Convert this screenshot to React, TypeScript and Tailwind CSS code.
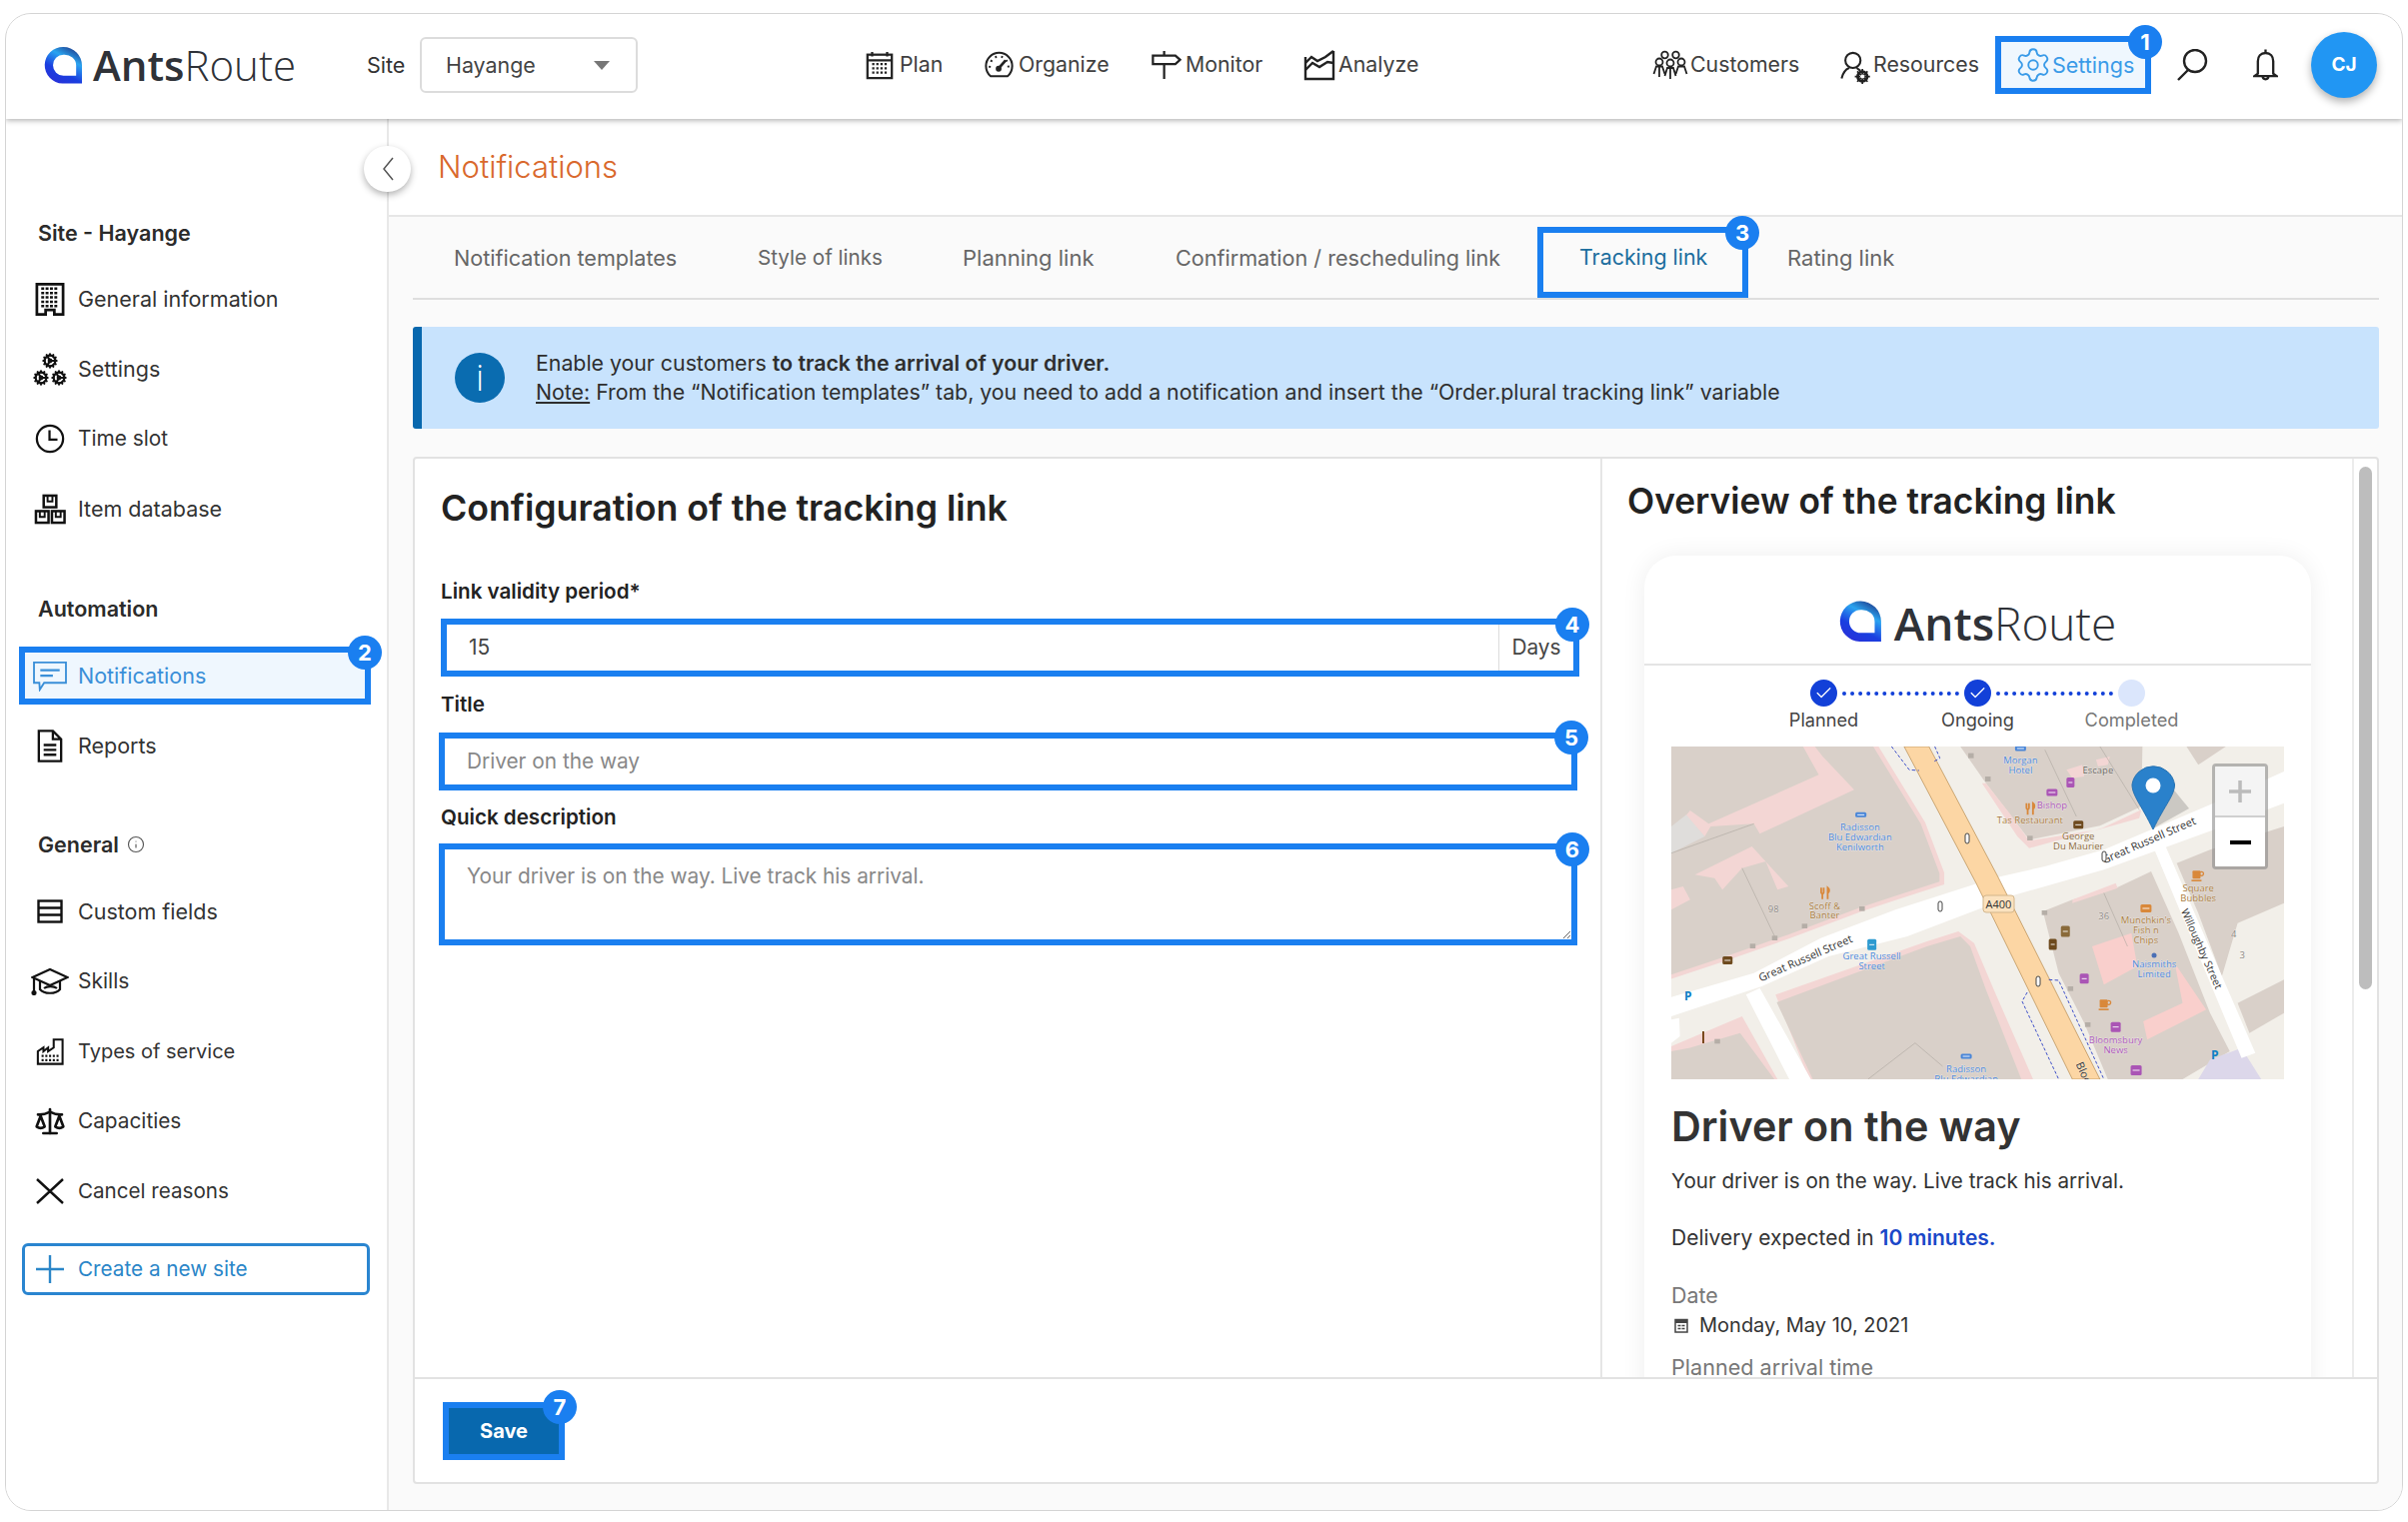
import React from "react";
import { Settings as Gear, Cog, Scale, Info, Check } from "lucide-react";

type SP = { className?: string };
const I = ({ className = "", vb = "0 0 32 32", w = 2, children }: { className?: string; vb?: string; w?: number; children: React.ReactNode }) => (
  <svg viewBox={vb} fill="none" stroke="currentColor" strokeWidth={w} className={className}>{children}</svg>
);

const LogoMark = ({ className = "", id }: { className?: string; id: string }) => (
  <svg viewBox="0 0 40 40" className={className}>
    <defs>
      <linearGradient id={id} x1="0.75" y1="0" x2="0.2" y2="1">
        <stop offset="0" stopColor="#1f3f8f" />
        <stop offset="0.3" stopColor="#2aa4f0" />
        <stop offset="0.65" stopColor="#1a3fe0" />
        <stop offset="1" stopColor="#2a2fd8" />
      </linearGradient>
    </defs>
    <path fillRule="evenodd" fill={`url(#${id})`} d="M20 1A19 19 0 0 1 39 20V38.500H19A18.700 18.700 0 0 1 20 1ZM20 9A10.500 10.500 0 0 0 20 30.500H33V20A12 11 0 0 0 20 9Z" />
  </svg>
);

const Brand = ({ size }: { size: string }) => (
  <span className={`font-['Open_Sans',sans-serif] text-[#2f3238] leading-none whitespace-nowrap ${size}`}>
    <span className="font-semibold">Ants</span><span className="font-light">Route</span>
  </span>
);

const Badge = ({ n, className }: { n: number; className: string }) => (
  <span className={`absolute z-20 w-[34px] h-[34px] rounded-full bg-[#1a7ff0] text-white text-[22px] font-bold flex items-center justify-center ${className}`}>{n}</span>
);

const PlanIcon = ({ className }: SP) => (
  <I className={className} w={2.4}>
    <rect x="3" y="5" width="26" height="25" />
    <path d="M3 11H29M8 2V7M24 2V7" />
    <path strokeWidth="2.400" strokeDasharray="2.400 2" d="M8 15H25M8 19.500H25M8 24H25" />
  </I>
);
const GaugeIcon = ({ className }: SP) => (
  <I className={className} w={2.2}>
    <path d="M7 28C3.500 25 2 21 2 17A14 14 0 0 1 30 17C30 21 28.500 25 25 28Z" />
    <path d="M16 19L23 11" strokeWidth="3" />
    <path strokeDasharray="2 4.500" d="M6 19C6 12 10 7 16 7C22 7 26 12 26 19" />
    <circle cx="15.500" cy="20" r="2" fill="currentColor" />
  </I>
);
const SignIcon = ({ className }: SP) => (
  <I className={className} w={2.4}>
    <path d="M2 6H26L31 10.500L26 15H2ZM14 1V6M14 15V31" />
  </I>
);
const AnalyzeIcon = ({ className }: SP) => (
  <I className={className} w={2.4}>
    <path d="M2 8V30H30V2" />
    <path d="M2 14L8 8L14 12L22 8L30 2M2 21L9 14L16 18L24 13L30 14" />
  </I>
);
const People = ({ className }: SP) => (
  <I className={className} vb="0 0 36 30" w={1.8}>
    <circle cx="12.500" cy="5" r="3.300" /><circle cx="23.500" cy="5" r="3.300" />
    <circle cx="7" cy="12" r="3.500" /><circle cx="18" cy="13" r="3.500" /><circle cx="29" cy="12" r="3.500" />
    <path d="M1.500 24L4 16.500H10L12.500 24M7 17V27M12.500 26L15 18H21L23.500 26M18 18V29M23.500 24L26 16.500H32L34.500 24" />
  </I>
);
const ResIcon = ({ className }: SP) => (
  <svg viewBox="0 0 34 38" fill="none" stroke="currentColor" className={className}>
    <circle cx="13" cy="11" r="8" strokeWidth="2.200" />
    <path d="M9 19C4 21 2 26 1 30" strokeWidth="2.200" />
    <path d="M17 19L21 22" strokeWidth="2.200" />
    <circle cx="23" cy="28" r="5" strokeWidth="3" />
    <path d="M23 20V36M15 28H31M17.500 22.500L28.500 33.500M28.500 22.500L17.500 33.500" strokeWidth="1.800" />
    <circle cx="23" cy="28" r="2.200" fill="#fff" stroke="none" />
  </svg>
);
const SearchIcon = ({ className }: SP) => (
  <I className={className} w={2.4}>
    <ellipse cx="19" cy="12" rx="11" ry="11" />
    <path d="M12 21L2 31" />
  </I>
);
const BellIcon = ({ className }: SP) => (
  <I className={className} vb="0 0 26 34" w={2.4}>
    <path d="M13 1V4M5 26V13C5 8 8 4.500 13 4.500C18 4.500 21 8 21 13V26L24.500 28.500H1.500Z" />
    <path d="M10 28.500C10 33 16 33 16 28.500" />
  </I>
);
const BuildingIcon = ({ className }: SP) => (
  <svg viewBox="0 0 30 34" className={className}>
    <path d="M1.500 1.500H28.500V32.500H19.500V28H10.500V32.500H1.500Z" fill="none" stroke="#111" strokeWidth="2.800" />
    <path d="M6 6H24M6 10.500H24M6 15H24M6 19.500H24M6 24H24" stroke="#111" strokeWidth="2.600" strokeDasharray="3 1.500" fill="none" />
  </svg>
);
const Gears = ({ className }: SP) => (
  <span className={`relative inline-block ${className}`}>
    <Cog className="absolute left-[9px] top-0 w-[16px] h-[16px]" strokeWidth={3.2} />
    <Cog className="absolute left-0 top-[17px] w-[16px] h-[16px]" strokeWidth={3.2} />
    <Cog className="absolute left-[18px] top-[17px] w-[16px] h-[16px]" strokeWidth={3.2} />
  </span>
);
const ClockIcon = ({ className }: SP) => (
  <I className={className} w={2.4}>
    <circle cx="16" cy="16" r="14" /><path d="M15.500 7V17H24" />
  </I>
);
const BoxesIcon = ({ className }: SP) => (
  <svg viewBox="0 0 34 32" className={className} fill="none" stroke="#111" strokeWidth="2.600">
    <rect x="10" y="2" width="13" height="12" /><rect x="2" y="18" width="13" height="12" /><rect x="18.500" y="18" width="13" height="12" />
    <path d="M14 2V8H19V2M6 18V24H11V18M22.500 18V24H27.500V18" strokeWidth="2" />
  </svg>
);
const ChatIcon = ({ className }: SP) => (
  <I className={className} vb="0 0 36 32" w={1.9}>
    <path d="M1.500 2H34.500V23H12L7.500 30L7 23H1.500Z" />
    <path d="M8 10H28M8 15.500H21" strokeWidth="2.300" />
  </I>
);
const DocIcon = ({ className }: SP) => (
  <I className={className} vb="0 0 26 34" w={2.4}>
    <path d="M1.500 1.500H16L24.500 10V32.500H1.500ZM16 1.500V10H24.500" />
    <path d="M6.500 16H19.500M6.500 21H19.500M6.500 26H19.500" />
  </I>
);
const RowsIcon = ({ className }: SP) => (
  <I className={className} vb="0 0 26 24" w={2.4}><rect x="1.500" y="1.500" width="23" height="21" /><path d="M1.500 8.500H24.500M1.500 15.500H24.500" /></I>
);
const CapIcon = ({ className }: SP) => (
  <I className={className} vb="0 0 38 28" w={2.2}>
    <path d="M1.500 10L19 2L36.500 10L19 18Z" />
    <path d="M9 13.500V22C13 27 25 27 29 22V13.500" />
    <path d="M13 21C16 18.500 23 18.500 26 21" />
    <path d="M3 11V25" />
    <circle cx="3" cy="25.500" r="1.500" fill="currentColor" />
  </I>
);
const FactoryIcon = ({ className }: SP) => (
  <I className={className} vb="0 0 30 30" w={2.2}>
    <path d="M2 28.500V15L8 11V15L13 11V15L19 11V2.500H28.500V28.500Z" />
    <path d="M6 20H25M6 24.500H25" strokeDasharray="2.200 1.800" strokeWidth="2.300" />
  </I>
);

const sx = 613 / 1558, sy = 1 / 3;
const T = ({ x, y, t, c = "#4a86d8", r, s = 9.5, a = "middle" as const }: { x: number; y: number; t: string; c?: string; r?: number; s?: number; a?: "middle" | "start" }) => {
  const X = x * sx, Y = y * sy;
  return <text x={X} y={Y} fontSize={s} fill={c} textAnchor={a} stroke="#fff" strokeWidth=".4" paintOrder="stroke" transform={r ? `rotate(${r} ${X} ${Y})` : undefined}>{t}</text>;
};
const B = ({ x, y, c, w = 11, h = 10 }: { x: number; y: number; c: string; w?: number; h?: number }) => (
  <g>
    <rect x={x * sx - w / 2} y={y * sy - h / 2} width={w} height={h} rx="1.500" fill={c} />
    <path d={`M${x * sx - w / 2 + 2} ${y * sy}H${x * sx + w / 2 - 2}`} stroke="#fff" strokeWidth=".9" />
  </g>
);
const Food = ({ x, y }: { x: number; y: number }) => (
  <g stroke="#d9883a" strokeWidth="1.800" fill="none" transform={`translate(${x * sx} ${y * sy})`}>
    <path d="M-3.500 -5.500V-1C-3.500 1 -1 1 -1 -1V-5.500M-2.300 0V6" />
    <path d="M3 6V-5.500C5 -4 5 -1 3 0" fill="#d9883a" />
  </g>
);
const Cup = ({ x, y }: { x: number; y: number }) => (
  <g transform={`translate(${x * sx} ${y * sy})`}>
    <rect x="-5" y="-5" width="8" height="8" fill="#d9883a" rx="1" />
    <circle cx="4" cy="-2" r="2" stroke="#d9883a" strokeWidth="1.300" fill="none" />
    <rect x="-6" y="4" width="10" height="1.600" fill="#d9883a" />
  </g>
);

const OsmMap = () => (
  <svg viewBox="0 0 613 333" preserveAspectRatio="none" className="block w-[613px] h-[333px] font-['Open_Sans',sans-serif]">
    <rect width="613" height="333" fill="#f2efe9" />
    <g transform={`scale(${sx} ${sy})`}>
      <path fill="#d9d0c9" stroke="#f3d6d4" strokeWidth="12" d="M-10 -10H515L640 230L688 380V410L570 455L480 490L300 570L130 640L-10 695Z" />
      <path fill="#f3d6d4" d="M335 0L375 85L95 232L48 192L35 210L85 270L100 240L210 232L225 262L465 130L385 30L365 0Z" />
      <path fill="#dfdddb" d="M0 240L38 205L85 270L0 320Z" />
      <path fill="#f3d6d4" d="M60 385L205 300L298 420L270 430L240 345L180 365L130 430L110 395ZM0 430L30 420L48 460L0 490Z" />
      <path fill="#d9d0c9" d="M735 0H1198L1195 180L1090 238L910 280L800 110Z" />
      <path fill="#f3d6d4" d="M790 110L880 270L910 305L1095 245L1195 190L1190 215L1085 250L910 283L860 200L800 110ZM1005 70L1045 55L1050 90L1020 95ZM1080 40L1115 30L1110 55L1085 60Z" />
      <path fill="#d9d0c9" d="M1310 0H1410L1340 55Z" />
      <path fill="#d9d0c9" d="M945 495L1020 460L1130 425L1220 375L1290 560L1370 800L1420 915L1300 999H1110L1050 830L985 680Z" />
      <path fill="#f9cfcc" d="M1070 600L1170 560L1185 660L1100 715ZM1280 650L1360 790L1210 880L1200 825L1300 770Z" />
      <path fill="#f3d6d4" d="M1020 460L1130 410L1135 425L1020 470Z" />
      <path fill="#d9d0c9" d="M1285 350L1370 310L1558 240V470L1440 530L1400 690L1340 500Z" />
      <path fill="#d9d0c9" d="M1440 770L1558 700V800L1470 860Z" />
      <path fill="#f3d6d4" d="M265 745L650 585L730 555L770 590L820 730L920 999H350Z" />
      <path fill="#d9d0c9" d="M268 768L650 600L735 570L760 600L800 730L890 999H360Z" />
      <path fill="#f3d6d4" d="M0 900L180 810L270 999H0Z" />
      <path fill="#d9d0c9" d="M0 915L45 905L175 860L262 999H0Z" />
      <path fill="#dcd7ea" d="M1370 940L1450 905L1500 999H1340Z" />
      <path fill="#fff" d="M0 752L210 680L380 575L570 490L780 410L830 392L950 360L1100 310L1370 175L1558 75V170L1380 250L1100 370L950 420L860 450L800 480L600 570L400 630L230 720L0 810Z" />
      <path fill="#fff" d="M1225 300L1255 295L1485 920L1450 935ZM190 745L225 725L355 999H300ZM0 820L20 815L22 870L0 890Z" />
      <path fill="#fcd6a4" stroke="#b98f55" strokeWidth="2" d="M592 0H655L830 390L1090 999H1020L775 410Z" />
      <path fill="none" stroke="#a9a39c" strokeWidth="1.500" d="M180 365L265 575M0 320L210 232M1100 440L1160 600M950 10L1030 210M1090 0L1190 190M500 999L620 890L690 960" />
      <path fill="none" stroke="#2b3fc4" strokeWidth="2.500" strokeDasharray="9 6" d="M560 0L605 70L630 72M670 0L683 35L668 45M960 700L985 702L1100 999M905 738L892 765L985 999" />
      <path fill="#f2efe9" d="M1285 80L1300 85L1320 190L1300 195Z" />
      <g fill="#b5aea7">
        <rect x="755" y="20" width="14" height="15" /><rect x="798" y="90" width="14" height="15" /><rect x="905" y="268" width="14" height="14" /><rect x="478" y="480" width="14" height="14" />
        <rect x="332" y="532" width="14" height="14" /><rect x="256" y="568" width="14" height="14" /><rect x="200" y="592" width="14" height="14" /><rect x="942" y="492" width="14" height="14" />
        <rect x="1008" y="720" width="14" height="14" /><rect x="1052" y="828" width="14" height="14" /><rect x="110" y="878" width="14" height="14" />
      </g>
    </g>
    <T x={888} y={52} t="Morgan" /><T x={888} y={82} t="Hotel" />
    <T x={1085} y={82} t="Escape" c="#6a6560" />
    <T x={968} y={187} t="Bishop" c="#aa55b5" />
    <T x={912} y={232} t="Tas Restaurant" c="#a87a3c" />
    <T x={1035} y={280} t="George" c="#8a6a3a" /><T x={1035} y={310} t="Du Maurier" c="#8a6a3a" />
    <T x={480} y={252} t="Radisson" /><T x={480} y={282} t="Blu Edwardian" /><T x={480} y={312} t="Kenilworth" />
    <T x={390} y={488} t="Scoff &" c="#a87a3c" /><T x={390} y={517} t="Banter" c="#a87a3c" />
    <T x={260} y={498} t="98" c="#8a8580" /><T x={1100} y={518} t="36" c="#8a8580" />
    <T x={1430} y={572} t="4" c="#8a8580" /><T x={1452} y={635} t="3" c="#8a8580" />
    <T x={1340} y={436} t="Square" c="#a87a3c" /><T x={1340} y={465} t="Bubbles" c="#a87a3c" />
    <T x={1207} y={531} t="Munchkin's" c="#a87a3c" /><T x={1207} y={561} t="Fish n" c="#a87a3c" /><T x={1207} y={591} t="Chips" c="#a87a3c" />
    <T x={1228} y={663} t="Naismiths" /><T x={1228} y={693} t="Limited" />
    <T x={510} y={639} t="Great Russell" /><T x={510} y={669} t="Street" />
    <T x={1130} y={890} t="Bloomsbury" c="#aa55b5" /><T x={1130} y={920} t="News" c="#aa55b5" />
    <T x={750} y={977} t="Radisson" /><T x={750} y={1007} t="Blu Edwardian" />
    <T x={345} y={646} t="Great Russell Street" c="#333" r={-23.5} s={11} />
    <T x={1218} y={292} t="Great Russell Street" c="#333" r={-23.5} s={11} />
    <T x={1340} y={612} t="Willoughby Street" c="#333" r={66} s={10.5} />
    <T x={1040} y={985} t="Bloo" c="#333" r={66} s={11} />
    <g>
      <rect x={312} y={149} width={31} height={17} rx="3" fill="#fbe2bf" stroke="#d3b68c" />
      <text x={327.5} y={162} fontSize="11" fill="#333" textAnchor="middle">A400</text>
    </g>
    <Food x={390} y={440} /><Food x={912} y={187} /><Cup x={1338} y={388} /><B x={1207} y={486} c="#d9883a" h={8} /><Cup x={1102} y={775} />
    <B x={1015} y={108} c="#aa55b5" w={8} /><B x={968} y={138} c="#aa55b5" w={11} h={7} /><B x={1050} y={697} c="#aa55b5" w={9} /><B x={1130} y={842} c="#aa55b5" w={10} /><B x={1182} y={972} c="#aa55b5" />
    <B x={1035} y={235} c="#6e4a1e" w={10} h={8} /><B x={143} y={642} c="#6e4a1e" w={10} h={8} /><B x={970} y={594} c="#6e4a1e" w={8} h={11} /><B x={1002} y={555} c="#8a6a3a" w={9} h={11} />
    <B x={482} y={205} c="#4a86d8" w={11} h={5} /><B x={750} y={930} c="#4a86d8" w={11} h={5} /><B x={510} y={595} c="#2d9ad0" w={9} h={11} /><B x={888} y={6} c="#4a86d8" w={11} h={5} />
    <text x={13} y={254} fontSize="12" fontWeight="700" fill="#0d7fc6">P</text>
    <text x={540} y={313} fontSize="12" fontWeight="700" fill="#0d7fc6">P</text>
    <rect x={31} y={285} width={2} height={12} fill="#7a4a1e" />
    <circle cx={483} cy={209} r={2.5} fill="#4a6fb5" />
    <g fill="#fff" stroke="#444" strokeWidth="1">
      <rect x={294} y={87} width={4} height={10} rx="2" /><rect x={267} y={155} width={4} height={10} rx="2" /><rect x={365} y={230} width={4} height={10} rx="2" /><rect x={431} y={105} width={4} height={10} rx="2" />
    </g>
    <path d="M482 82L500 40L518 62Z" fill="#000" opacity=".16" />
    <path d="M482 83C470 58 461 49 461 38A21.500 21.500 0 0 1 503.500 38C503.500 49 494 58 482 83Z" fill="#2a81cb" stroke="#2672b2" />
    <circle cx="482" cy="39" r="7.500" fill="#fff" />
    <foreignObject x="541" y="17" width="56" height="106">
      <div className="w-[56px] h-[106px] border-[3px] border-[#8a8a8a]/60 rounded-[4px] overflow-hidden flex flex-col">
        <div className="h-[51px] bg-[#f4f4f4] border-b-2 border-[#cfcfcf] flex items-center justify-center">
          <svg viewBox="0 0 22 22" className="w-[22px] h-[22px]"><path d="M11 0V22M0 11H22" stroke="#bbb" strokeWidth="3.500" /></svg>
        </div>
        <div className="flex-1 bg-white flex items-center justify-center"><div className="w-[21px] h-[4px] bg-black" /></div>
      </div>
    </foreignObject>
  </svg>
);

const Nav = ({ icon, label, w }: { icon: React.ReactNode; label: string; w: string }) => (
  <div className={`flex items-center h-full text-[21.3px] text-[#404040] ${w}`}>
    {icon}<span className="whitespace-nowrap">{label}</span>
  </div>
);

const SideItem = ({ icon, label, t = "text-[21.5px]" }: { icon: React.ReactNode; label: string; t?: string }) => (
  <div className={`h-[70px] flex items-center pl-[22px] text-[#333] ${t}`}>
    <span className="w-[44px] flex justify-center text-[#111]">{icon}</span>
    <span className="ml-[6px] whitespace-nowrap">{label}</span>
  </div>
);
const SideHead = ({ children, className = "" }: { children: React.ReactNode; className?: string }) => (
  <div className={`h-[30px] flex items-center pl-[32px] text-[21.5px] font-semibold text-[#2b2b2b] ${className}`}>{children}</div>
);

const Tab = ({ w, children, t = "text-[21.6px]" }: { w: string; children: React.ReactNode; t?: string }) => (
  <div className={`h-[62px] flex items-center text-[#666] whitespace-nowrap ${t} ${w}`}>{children}</div>
);

const inputBox = "relative border-[6px] border-[#1a7ff0] bg-white h-[58px] flex";
const field = "flex-1 min-w-0 bg-white outline-none pl-[22px] text-[20.8px] text-[#444] placeholder:text-[#888]";
const label = "h-[24px] flex items-center text-[20.6px] font-semibold text-[#222]";

export default function App() {
  return (
    <div className="min-h-[1523px] bg-white pt-[13px] pl-[5px] font-['Inter',sans-serif]">
      <div className="w-[2399px] h-[1499px] border border-[#d4d4d4] rounded-[26px] overflow-hidden flex flex-col bg-white">
        <header className="relative z-10 h-[105px] pb-[3px] shrink-0 flex items-center bg-white shadow-[0_2px_5px_rgba(0,0,0,0.28)]">
          <div className="ml-[37px] w-[324px] flex items-center shrink-0">
            <LogoMark id="lg1" className="w-[41px] h-[39px]" />
            <span className="ml-[9px] mt-[1px]"><Brand size="text-[42px]" /></span>
          </div>
          <span className="w-[53px] shrink-0 text-[21.5px] text-[#333]">Site</span>
          <div className="w-[218px] h-[56px] shrink-0 border-2 border-[#dcdcdc] rounded-[6px] flex items-center pl-[24px] pr-[26px] justify-between text-[21.4px] text-[#444]">
            <span>Hayange</span>
            <span className="w-0 h-0 border-l-[8px] border-r-[8px] border-t-[9px] border-l-transparent border-r-transparent border-t-[#777]" />
          </div>
          <div className="ml-[227px] flex items-center h-full shrink-0">
            <Nav w="w-[119px]" label="Plan" icon={<PlanIcon className="w-[30px] h-[30px] mr-[5px] text-[#222]" />} />
            <Nav w="w-[167px]" label="Organize" icon={<GaugeIcon className="w-[31px] h-[30px] mr-[4px] text-[#222]" />} />
            <Nav w="w-[153px]" label="Monitor" icon={<SignIcon className="w-[31px] h-[30px] mr-[4px] text-[#222]" />} />
            <Nav w="w-[349px]" label="Analyze" icon={<AnalyzeIcon className="w-[32px] h-[32px] mr-[3px] text-[#222]" />} />
            <Nav w="w-[188px]" label="Customers" icon={<People className="w-[36px] h-[30px] mr-[2px] text-[#222]" />} />
            <Nav w="w-[155px]" label="Resources" icon={<ResIcon className="w-[33px] h-[36px] text-[#222] mt-[6px]" />} />
            <div className="relative w-[156px] h-[58px] border-[6px] border-[#1a7ff0] bg-[#eff7fe] flex items-center pl-[13px] text-[21.5px] text-[#3a9be8]">
              <Gear className="w-[38px] h-[38px] shrink-0" strokeWidth={1.2} />
              <span>Settings</span>
              <Badge n={1} className="left-[127px] top-[-17px]" />
            </div>
            <SearchIcon className="ml-[25px] w-[32px] h-[32px] text-[#222]" />
            <BellIcon className="ml-[45px] w-[25px] h-[34px] text-[#222]" />
            <div className="ml-[33px] w-[66px] h-[66px] rounded-full bg-[#2196f3] text-white text-[19px] font-bold flex items-center justify-center shadow-[0_4px_8px_rgba(0,0,0,0.3)]">CJ</div>
          </div>
        </header>

        <div className="flex-1 flex min-h-0">
          <aside className="relative w-[383px] shrink-0 border-r-2 border-[#e8e8e8] bg-white pt-[99px]">
            <div className="absolute right-[-24px] top-[27px] z-10 w-[47px] h-[46px] rounded-full bg-white shadow-[0_3px_7px_rgba(0,0,0,0.3)] flex items-center justify-center text-[#555]">
              <svg viewBox="0 0 12 24" className="w-[12px] h-[24px]" fill="none" stroke="currentColor" strokeWidth="1.500"><path d="M11 1L2 12L11 23" /></svg>
            </div>
            <SideHead>Site - Hayange</SideHead>
            <div className="mt-[16px]">
              <SideItem label="General information" icon={<BuildingIcon className="w-[30px] h-[33px]" />} />
              <SideItem label="Settings" icon={<Gears className="w-[34px] h-[33px]" />} />
              <SideItem label="Time slot" t="text-[20.8px]" icon={<ClockIcon className="w-[30px] h-[30px]" />} />
              <SideItem label="Item database" icon={<BoxesIcon className="w-[33px] h-[31px]" />} />
            </div>
            <SideHead className="mt-[50px]">Automation</SideHead>
            <div className="mt-[17px]">
              <div className="h-[70px] flex items-center">
                <div className="relative ml-[13px] w-[352px] h-[58px] border-[6px] border-[#1a7ff0] bg-[#eff7fe] flex items-center text-[21.5px] text-[#3a8fd8]">
                  <span className="w-[44px] ml-[3px] flex justify-center"><ChatIcon className="w-[36px] h-[31px] text-[#3a8fd8]" /></span>
                  <span className="ml-[6px]">Notifications</span>
                  <Badge n={2} className="left-[323px] top-[-17px]" />
                </div>
              </div>
              <SideItem label="Reports" icon={<DocIcon className="w-[26px] h-[33px]" />} />
            </div>
            <SideHead className="mt-[49px]">General<Info className="ml-[8px] w-[18px] h-[18px] text-[#555]" strokeWidth={1.5} /></SideHead>
            <div className="mt-[17px]">
              <SideItem label="Custom fields" icon={<RowsIcon className="w-[26px] h-[24px]" />} />
              <SideItem label="Skills" t="text-[21px]" icon={<CapIcon className="w-[38px] h-[28px]" />} />
              <SideItem label="Types of service" t="text-[20px]" icon={<FactoryIcon className="w-[28px] h-[28px]" />} />
              <SideItem label="Capacities" t="text-[20.8px]" icon={<Scale className="w-[34px] h-[32px]" strokeWidth={2} />} />
              <SideItem label="Cancel reasons" t="text-[20.6px]" icon={<svg viewBox="0 0 28 26" className="w-[28px] h-[26px]" fill="none" stroke="currentColor" strokeWidth="2.400"><path d="M1 1L27 25M27 1L1 25" /></svg>} />
            </div>
            <div className="mt-[17px] ml-[16px] w-[348px] h-[52px] border-[3px] border-[#2a85d0] rounded-[6px] flex items-center text-[20.7px] text-[#2b86c8]">
              <span className="w-[44px] ml-[3px] flex justify-center"><svg viewBox="0 0 28 28" className="w-[28px] h-[28px]" fill="none" stroke="currentColor" strokeWidth="2.400"><path d="M14 0V28M0 14H28" /></svg></span>
              <span className="ml-[6px]">Create a new site</span>
            </div>
          </aside>

          <main className="flex-1 min-w-0 bg-[#fafafa] flex flex-col">
            <div className="h-[98px] shrink-0 bg-white border-b-2 border-[#e6e6e6] flex items-center pl-[49px] text-[31px] font-light text-[#d9682c]">Notifications</div>
            <div className="flex-1 min-h-0 pl-[24px] pr-[23px] flex flex-col pb-[26px]">
              <div className="h-[83px] shrink-0 pt-[12px] border-b-2 border-[#dedede] flex items-end">
                <div className="flex items-start h-[71px] pl-[41px]">
                  <Tab w="w-[304px]">Notification templates</Tab>
                  <Tab w="w-[205px]" t="text-[20.6px]">Style of links</Tab>
                  <Tab w="w-[213px]" t="text-[22px]">Planning link</Tab>
                  <Tab w="w-[362px]">Confirmation / rescheduling link</Tab>
                  <div className="relative w-[211px] h-[71px] border-[6px] border-[#1a7ff0] flex items-center pl-[36px] pb-[11px] text-[21.4px] text-[#1c6e9e] whitespace-nowrap">
                    Tracking link
                    <Badge n={3} className="left-[182px] top-[-17px]" />
                  </div>
                  <Tab w="ml-[39px]" t="text-[22px]">Rating link</Tab>
                </div>
              </div>
              <div className="mt-[27px] h-[102px] shrink-0 bg-[#c8e3fd] border-l-[9px] border-[#0868ae] rounded-[3px] flex items-center pl-[33px] text-[21.3px] text-[#2e2e2e]">
                <div className="w-[50px] h-[50px] rounded-full bg-[#0a6cb0] flex items-center justify-center text-white text-[36px] font-light shrink-0 font-['Open_Sans',sans-serif]">i</div>
                <div className="ml-[31px] leading-[29px]">
                  <div>Enable your customers <strong className="font-semibold">to track the arrival of your driver.</strong></div>
                  <div><span className="underline">Note:</span> From the “Notification templates” tab, you need to add a notification and insert the “Order.plural tracking link” variable</div>
                </div>
              </div>
              <section className="mt-[28px] flex-1 min-h-0 bg-white border-2 border-[#e2e2e2] rounded-[4px] flex flex-col">
                <div className="flex-1 min-h-0 flex">
                  <div className="w-[1186px] shrink-0 pl-[26px] pt-[30px]">
                    <h2 className="h-[40px] flex items-center text-[35.7px] font-semibold text-[#222] whitespace-nowrap">Configuration of the tracking link</h2>
                    <div className={`mt-[51px] ${label}`}>Link validity period*</div>
                    <div className={`${inputBox} mt-[15px] w-[1139px]`}>
                      <input readOnly value="15" className={field} />
                      <span className="w-[75px] border-l border-[#dcdcdc] flex items-center justify-center text-[20.8px] text-[#444]">Days</span>
                      <Badge n={4} className="left-[1109px] top-[-17px]" />
                    </div>
                    <div className={`mt-[16px] ${label}`}>Title</div>
                    <div className={`${inputBox} mt-[16px] ml-[-2px] w-[1139px]`}>
                      <input readOnly placeholder="Driver on the way" className={field} />
                      <Badge n={5} className="left-[1110px] top-[-18px]" />
                    </div>
                    <div className={`mt-[15px] ${label}`}>Quick description</div>
                    <div className={`${inputBox} mt-[14px] ml-[-2px] w-[1139px] !h-[102px]`}>
                      <textarea readOnly placeholder="Your driver is on the way. Live track his arrival." className={`${field} pt-[14px] leading-[26px]`} />
                      <Badge n={6} className="left-[1111px] top-[-17px]" />
                    </div>
                  </div>
                  <div className="flex-1 min-w-0 flex border-l-2 border-[#e6e6e6] overflow-hidden">
                    <div className="w-[750px] shrink-0 pt-[23px] overflow-hidden">
                      <h2 className="h-[40px] ml-[25px] flex items-center text-[35.3px] font-semibold text-[#222] whitespace-nowrap">Overview of the tracking link</h2>
                      <div className="mt-[34px] ml-[42px] w-[667px] h-[900px] rounded-t-[32px] bg-white shadow-[0_0_24px_rgba(0,0,0,0.07)]">
                        <div className="h-[110px] pt-[24px] border-b-2 border-[#e4e4e4] flex items-center justify-center">
                          <LogoMark id="lg2" className="w-[43px] h-[44px]" />
                          <span className="ml-[12px] mt-[2px]"><Brand size="text-[46px]" /></span>
                        </div>
                        <div className="pt-[14px] flex items-center justify-center">
                          <span className="w-[27px] h-[27px] rounded-full bg-[#1240d8] flex items-center justify-center text-white"><Check className="w-[19px] h-[19px]" strokeWidth={1.6} /></span>
                          <span className="w-[117px] mx-[5px] border-t-4 border-dotted border-[#1240d8]" />
                          <span className="w-[27px] h-[27px] rounded-full bg-[#1240d8] flex items-center justify-center text-white"><Check className="w-[19px] h-[19px]" strokeWidth={1.6} /></span>
                          <span className="w-[117px] mx-[5px] border-t-4 border-dotted border-[#1240d8]" />
                          <span className="w-[27px] h-[27px] rounded-full bg-[#dbe6fc]" />
                        </div>
                        <div className="mt-[1px] flex justify-center text-[18.2px] leading-[24px] text-[#444]">
                          <span className="w-[154px] text-center">Planned</span>
                          <span className="w-[154px] text-center">Ongoing</span>
                          <span className="w-[154px] text-center text-[#777]">Completed</span>
                        </div>
                        <div className="mt-[15px] ml-[27px] w-[613px]"><OsmMap /></div>
                        <div className="ml-[27px]">
                          <div className="mt-[23px] h-[50px] flex items-center text-[41.3px] font-semibold text-[#333] whitespace-nowrap">Driver on the way</div>
                          <div className="mt-[15px] h-[28px] flex items-center text-[20.6px] text-[#333]">Your driver is on the way. Live track his arrival.</div>
                          <div className="mt-[29px] h-[28px] flex items-center text-[21px] text-[#333] whitespace-pre">Delivery expected in <span className="font-semibold text-[#1a47c8]">10 minutes.</span></div>
                          <div className="mt-[29px] h-[28px] flex items-center text-[21.4px] text-[#777]">Date</div>
                          <div className="mt-[2px] h-[28px] flex items-center text-[20px] text-[#333]">
                            <svg viewBox="0 0 14 15" className="w-[14px] h-[15px] ml-[3px] mr-[11px]"><rect x="1" y="1.500" width="12" height="12.500" fill="none" stroke="#444" strokeWidth="1.500" /><rect x="1" y="1.500" width="12" height="3.500" fill="#444" /><path d="M3.500 7.500H6.500M7.500 7.500H10.500M3.500 10.500H6.500M7.500 10.500H10.500" stroke="#444" strokeWidth="1.500" /></svg>
                            Monday, May 10, 2021
                          </div>
                          <div className="mt-[17px] h-[22px] leading-[22px] text-[21.6px] text-[#777] whitespace-nowrap">Planned arrival time</div>
                        </div>
                      </div>
                    </div>
                    <div className="flex-1 border-l-2 border-[#ececec] pt-[8px] pl-[5px]">
                      <div className="w-[13px] h-[523px] rounded-full bg-[#bdbdbd]" />
                    </div>
                  </div>
                </div>
                <div className="h-[105px] shrink-0 border-t-2 border-[#e2e2e2] pt-[23px] pl-[28px]">
                  <button className="relative w-[122px] h-[58px] border-[6px] border-[#1a7ff0] bg-[#0868ae] text-white text-[20px] font-bold">
                    Save
                    <Badge n={7} className="left-[94px] top-[-18px]" />
                  </button>
                </div>
              </section>
            </div>
          </main>
        </div>
      </div>
    </div>
  );
}
